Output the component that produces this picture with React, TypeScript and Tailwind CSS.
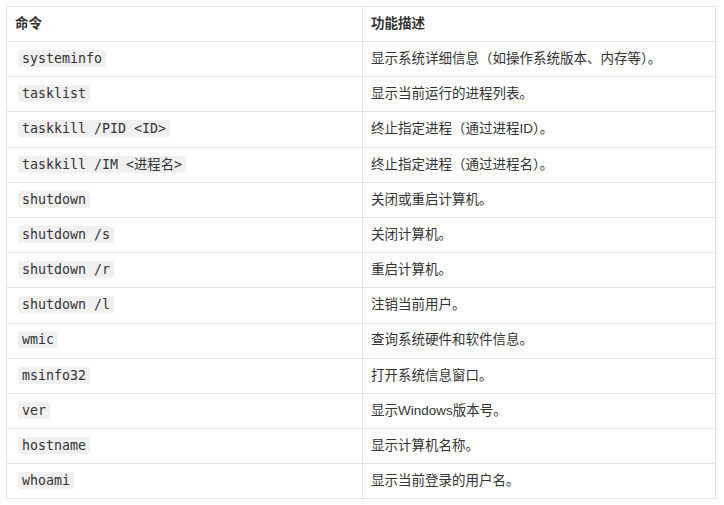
import React from 'react';

const ROWS: [string, string][] = [
  ['systeminfo', '显示系统详细信息（如操作系统版本、内存等）。'],
  ['tasklist', '显示当前运行的进程列表。'],
  ['taskkill /PID <ID>', '终止指定进程（通过进程ID）。'],
  ['taskkill /IM <进程名>', '终止指定进程（通过进程名）。'],
  ['shutdown', '关闭或重启计算机。'],
  ['shutdown /s', '关闭计算机。'],
  ['shutdown /r', '重启计算机。'],
  ['shutdown /l', '注销当前用户。'],
  ['wmic', '查询系统硬件和软件信息。'],
  ['msinfo32', '打开系统信息窗口。'],
  ['ver', '显示Windows版本号。'],
  ['hostname', '显示计算机名称。'],
  ['whoami', '显示当前登录的用户名。'],
];

const sans = { fontFamily: '"Liberation Sans", "Noto Sans CJK SC", sans-serif' };
const mono = { fontFamily: '"DejaVu Sans Mono", "Noto Sans CJK SC", monospace' };

export default function App() {
  return (
    <div className="bg-white w-[724px] h-[505px] p-[6px] text-[#333]" style={sans}>
      <table className="w-[710px] border-collapse table-fixed text-[13.5px]">
        <colgroup>
          <col className="w-[356px]" />
          <col />
        </colgroup>
        <thead>
          <tr className="h-[35px]">
            <th className="border border-[#e3e3e3] px-2 text-left font-bold">命令</th>
            <th className="border border-[#e3e3e3] px-2 text-left font-bold">功能描述</th>
          </tr>
        </thead>
        <tbody>
          {ROWS.map(([cmd, desc]) => (
            <tr key={cmd} className="h-[35.2px]">
              <td className="border border-[#e3e3e3] px-2">
                <code
                  className="ml-[3px] rounded-[3px] bg-[#f0f0f0] px-[4px] py-[1px] text-[13.3px] text-[#333]"
                  style={mono}
                >
                  {cmd}
                </code>
              </td>
              <td className="border border-[#e3e3e3] px-2">{desc}</td>
            </tr>
          ))}
        </tbody>
      </table>
    </div>
  );
}
